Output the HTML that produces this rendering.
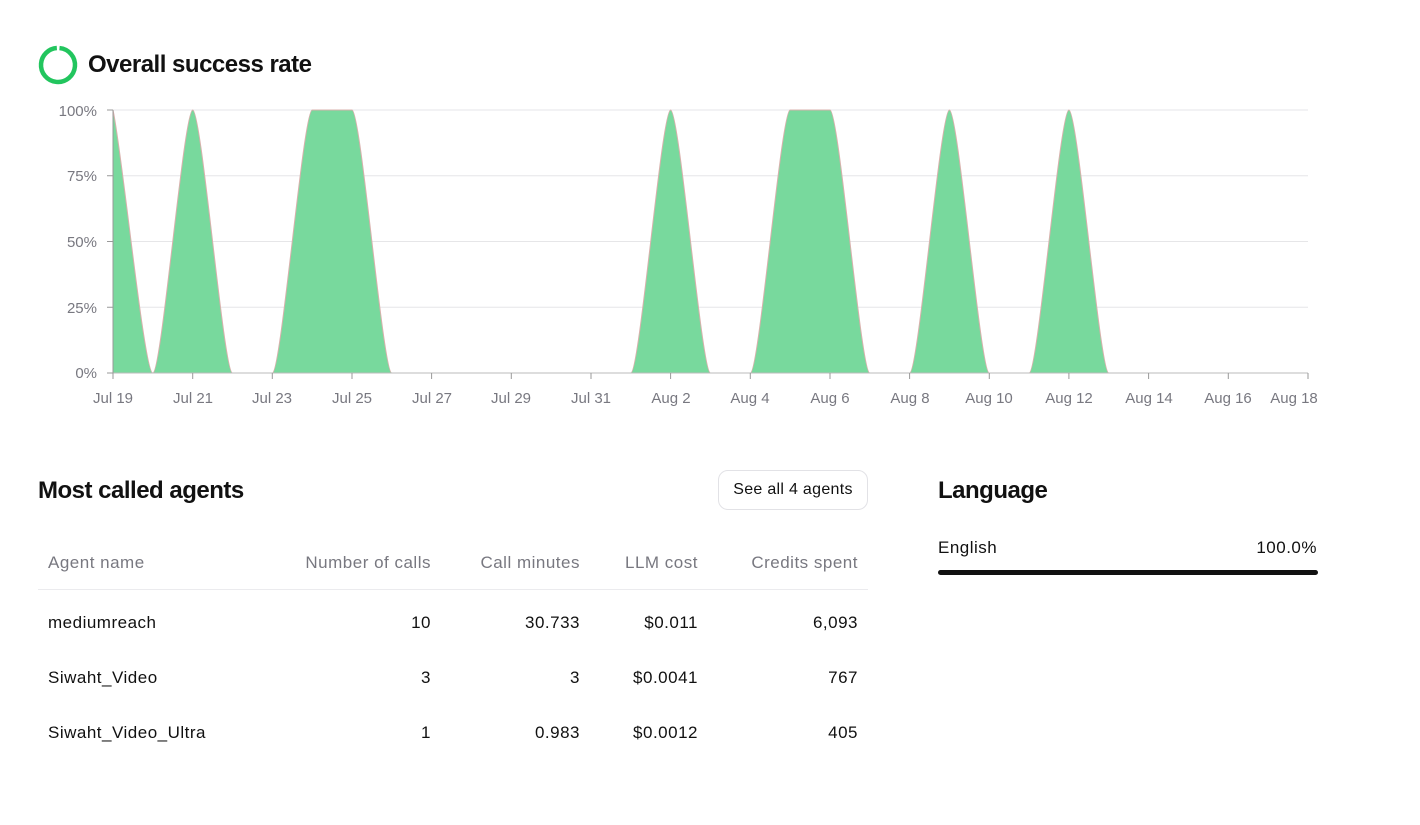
<!DOCTYPE html>
<html><head><meta charset="utf-8"><style>
body{margin:0;width:1420px;height:825px;background:#fff;font-family:"Liberation Sans",sans-serif;position:relative;overflow:hidden;color:#111}
.abs{position:absolute}
h2{margin:0;position:absolute;font-size:24px;font-weight:bold;letter-spacing:-0.5px;color:#111}
.hd{color:#787880}
.c{position:absolute;font-size:17px;letter-spacing:0.5px;white-space:nowrap}
.r{text-align:right}
.btn{position:absolute;left:718px;top:470px;width:150px;height:40px;border:1px solid #e2e2e6;border-radius:10px;font-size:16px;letter-spacing:0.3px;line-height:38px;text-align:center;box-sizing:border-box}
</style></head><body>
<svg class="abs" style="left:38px;top:45px" width="40" height="40" viewBox="0 0 40 40"><circle cx="20" cy="20" r="17" fill="none" stroke="#22c55e" stroke-width="4.5" stroke-dasharray="104 3" transform="rotate(-85 20 20)"/></svg>
<h2 style="left:88px;top:51px">Overall success rate</h2>
<svg class="abs" style="left:0;top:0" width="1420" height="420">
<g stroke="#e6e6e8" stroke-width="1">
<line x1="113" y1="110" x2="1308" y2="110"/><line x1="113" y1="175.75" x2="1308" y2="175.75"/><line x1="113" y1="241.5" x2="1308" y2="241.5"/><line x1="113" y1="307.25" x2="1308" y2="307.25"/>
</g>
<path d="M113,373 L113,110 C122,150 144,373 152.8,373 C161.8,373 183.7,110 192.7,110 C201.7,110 223.5,373 232.5,373 L272.3,373 C281.3,373 303.2,110 312.2,110 L352,110 C361,110 382.8,373 391.8,373 L630.8,373 C639.8,373 661.6,110 670.6,110 C679.6,110 701.5,373 710.5,373 L750.3,373 C759.3,373 781.1,110 790.1,110 L830,110 C839,110 860.8,373 869.8,373 L909.6,373 C918.6,373 940.4,110 949.4,110 C958.4,110 980.3,373 989.3,373 L1029.1,373 C1038.1,373 1059.9,110 1068.9,110 C1077.9,110 1099.8,373 1108.8,373 Z" fill="#78d99d" stroke="#d8b0ac" stroke-width="1"/>
<line x1="113" y1="373" x2="1308" y2="373" stroke="#bbb"/>
<line x1="113" y1="110" x2="113" y2="373" stroke="#999"/>
<g stroke="#999"><line x1="107" y1="110" x2="113" y2="110"/><line x1="107" y1="175.75" x2="113" y2="175.75"/><line x1="107" y1="241.5" x2="113" y2="241.5"/><line x1="107" y1="307.25" x2="113" y2="307.25"/><line x1="107" y1="373" x2="113" y2="373"/>
<line x1="113" y1="373" x2="113" y2="379"/><line x1="192.7" y1="373" x2="192.7" y2="379"/><line x1="272.3" y1="373" x2="272.3" y2="379"/><line x1="352" y1="373" x2="352" y2="379"/><line x1="431.6" y1="373" x2="431.6" y2="379"/><line x1="511.3" y1="373" x2="511.3" y2="379"/><line x1="591" y1="373" x2="591" y2="379"/><line x1="670.6" y1="373" x2="670.6" y2="379"/><line x1="750.3" y1="373" x2="750.3" y2="379"/><line x1="830" y1="373" x2="830" y2="379"/><line x1="909.6" y1="373" x2="909.6" y2="379"/><line x1="989.3" y1="373" x2="989.3" y2="379"/><line x1="1068.9" y1="373" x2="1068.9" y2="379"/><line x1="1148.6" y1="373" x2="1148.6" y2="379"/><line x1="1228.3" y1="373" x2="1228.3" y2="379"/><line x1="1308" y1="373" x2="1308" y2="379"/></g>
<g font-family="Liberation Sans, sans-serif" font-size="15" fill="#787880" text-anchor="end">
<text x="97" y="116">100%</text><text x="97" y="181">75%</text><text x="97" y="247">50%</text><text x="97" y="313">25%</text><text x="97" y="378">0%</text></g>
<g font-family="Liberation Sans, sans-serif" font-size="15" fill="#787880" text-anchor="middle">
<text x="113" y="403">Jul 19</text><text x="193" y="403">Jul 21</text><text x="272" y="403">Jul 23</text><text x="352" y="403">Jul 25</text><text x="432" y="403">Jul 27</text><text x="511" y="403">Jul 29</text><text x="591" y="403">Jul 31</text><text x="671" y="403">Aug 2</text><text x="750" y="403">Aug 4</text><text x="830" y="403">Aug 6</text><text x="910" y="403">Aug 8</text><text x="989" y="403">Aug 10</text><text x="1069" y="403">Aug 12</text><text x="1149" y="403">Aug 14</text><text x="1228" y="403">Aug 16</text><text x="1294" y="403">Aug 18</text></g>
</svg>
<h2 style="left:38px;top:477px">Most called agents</h2>
<div class="btn">See all 4 agents</div>
<div class="c hd" style="left:48px;top:553px">Agent name</div>
<div class="c hd r" style="right:989px;top:553px">Number of calls</div>
<div class="c hd r" style="right:840px;top:553px">Call minutes</div>
<div class="c hd r" style="right:722px;top:553px">LLM cost</div>
<div class="c hd r" style="right:562px;top:553px">Credits spent</div>
<div class="abs" style="left:38px;top:589px;width:830px;height:1px;background:#ebebee"></div>
<div class="c" style="left:48px;top:613px">mediumreach</div>
<div class="c r" style="right:989px;top:613px">10</div>
<div class="c r" style="right:840px;top:613px">30.733</div>
<div class="c r" style="right:722px;top:613px">$0.011</div>
<div class="c r" style="right:562px;top:613px">6,093</div>
<div class="c" style="left:48px;top:668px">Siwaht_Video</div>
<div class="c r" style="right:989px;top:668px">3</div>
<div class="c r" style="right:840px;top:668px">3</div>
<div class="c r" style="right:722px;top:668px">$0.0041</div>
<div class="c r" style="right:562px;top:668px">767</div>
<div class="c" style="left:48px;top:723px">Siwaht_Video_Ultra</div>
<div class="c r" style="right:989px;top:723px">1</div>
<div class="c r" style="right:840px;top:723px">0.983</div>
<div class="c r" style="right:722px;top:723px">$0.0012</div>
<div class="c r" style="right:562px;top:723px">405</div>
<h2 style="left:938px;top:477px">Language</h2>
<div class="c" style="left:938px;top:538px">English</div>
<div class="c r" style="right:103px;top:538px">100.0%</div>
<div class="abs" style="left:938px;top:570px;width:380px;height:5px;border-radius:3px;background:#111"></div>
</body></html>
